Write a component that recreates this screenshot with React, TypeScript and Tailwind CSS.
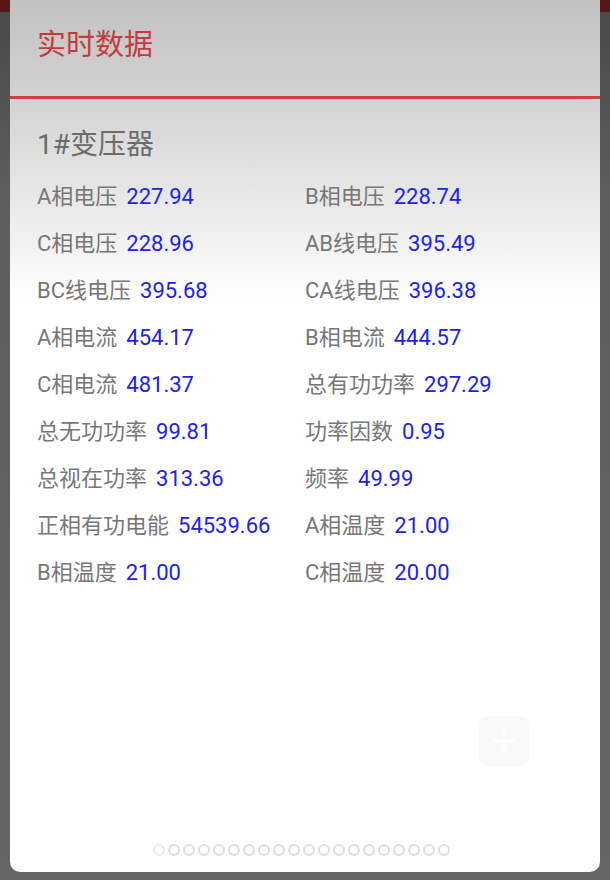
import React from "react";

const rows: [string, string, string, string][] = [
  ["A相电压", "227.94", "B相电压", "228.74"],
  ["C相电压", "228.96", "AB线电压", "395.49"],
  ["BC线电压", "395.68", "CA线电压", "396.38"],
  ["A相电流", "454.17", "B相电流", "444.57"],
  ["C相电流", "481.37", "总有功功率", "297.29"],
  ["总无功功率", "99.81", "功率因数", "0.95"],
  ["总视在功率", "313.36", "频率", "49.99"],
  ["正相有功电能", "54539.66", "A相温度", "21.00"],
  ["B相温度", "21.00", "C相温度", "20.00"],
];

function Item({ label, value }: { label: string; value: string }) {
  return (
    <div className="flex items-center h-[47px] text-[22px] whitespace-nowrap">
      <span className="text-[#777777]">{label}</span>
      <span className="ml-[9px] text-[#2121ee]">{value}</span>
    </div>
  );
}

export default function App() {
  const font = { fontFamily: "Roboto, 'Noto Sans CJK SC', sans-serif" };
  return (
    <div
      className="h-[880px] w-[610px] px-[10px] pb-[8px] bg-[linear-gradient(to_bottom,#5a1616_0px,#5a1616_12px,#4a4a4a_12px,#5e5e5e_200px,#666666_880px)]"
      style={font}
    >
      <div className="relative h-[872px] flex flex-col rounded-b-[10px] bg-[linear-gradient(to_bottom,#c2c2c2_0px,#d2d2d2_96px,#e0e0e0_160px,#f3f3f3_250px,#ffffff_300px)]">
        <div className="h-[96px] flex items-center px-[27px] pb-[6px]">
          <span className="text-[29px] text-[#c43b3b] leading-none">实时数据</span>
        </div>
        <div className="h-[3px] bg-[#c94141]" />
        <div className="px-[27px] pt-[30px]">
          <div className="text-[28px] leading-[32px] text-[#6b6b6b]">1#变压器</div>
          <div className="mt-[12px]">
            {rows.map((r, i) => (
              <div key={i} className="grid grid-cols-[268px_1fr]">
                <Item label={r[0]} value={r[1]} />
                <Item label={r[2]} value={r[3]} />
              </div>
            ))}
          </div>
        </div>

        <div className="absolute right-[71px] top-[716px] w-[50px] h-[50px] rounded-[9px] bg-[#f9f9f9] flex items-center justify-center">
          <div className="relative w-[22px] h-[22px] flex items-center justify-center">
            <div className="w-[4px] h-[22px] bg-[#fefefe]" />
            <div className="absolute w-[22px] h-[4px] bg-[#fefefe]" />
          </div>
        </div>

        <div className="mt-auto pb-[16px] flex justify-center gap-[3px] pr-[8px]">
          {Array.from({ length: 20 }).map((_, i) => (
            <div
              key={i}
              className={
                i === 0
                  ? "w-[12px] h-[12px] rounded-full border-2 border-[#ececec]"
                  : "w-[12px] h-[12px] rounded-full border-2 border-[#dddddd]"
              }
            />
          ))}
        </div>
      </div>
    </div>
  );
}
